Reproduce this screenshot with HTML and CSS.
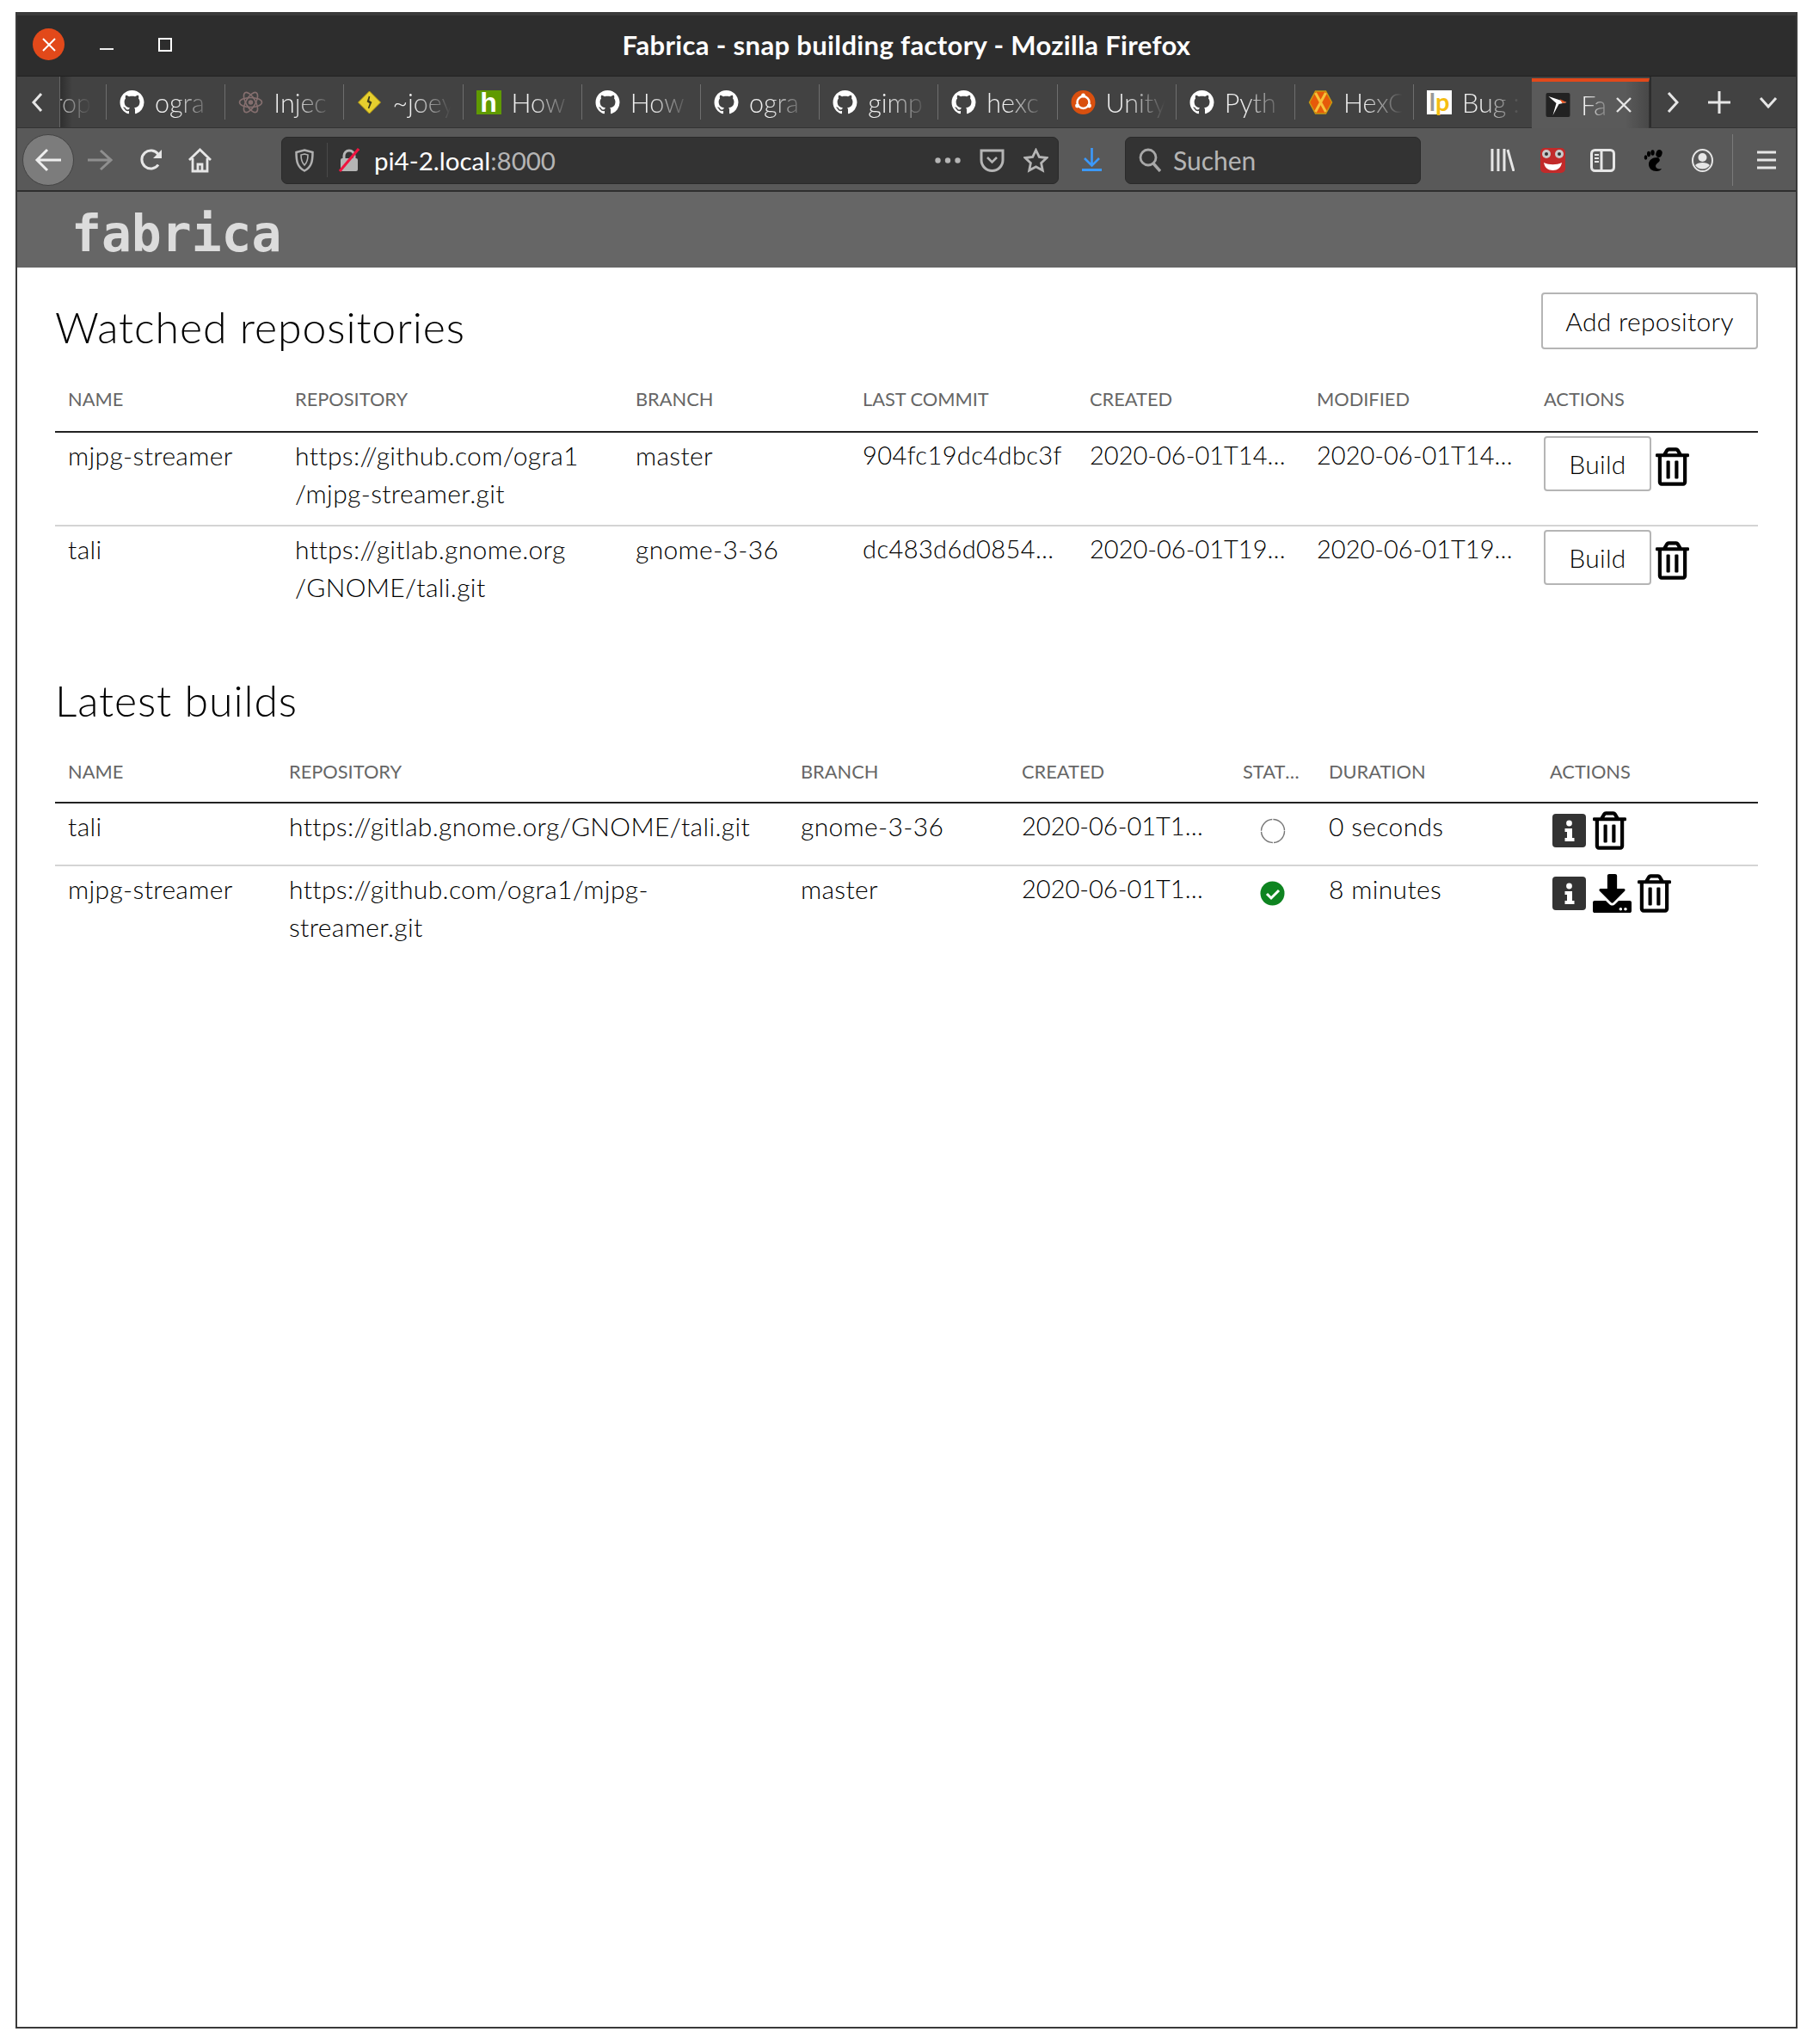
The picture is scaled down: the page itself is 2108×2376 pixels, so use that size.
FILE: index.html
```html
<!DOCTYPE html>
<html lang="en">
<head>
  <meta charset="UTF-8">
  <title>Fabrica - snap building factory - Mozilla Firefox</title>
  <link rel="stylesheet" href="styles.css">
</head>
<body>
  <svg class="sprites" width="0" height="0">
    <symbol id="i-github" viewBox="0 0 16 16"><path fill="currentColor" d="M8 0C3.58 0 0 3.58 0 8c0 3.54 2.29 6.53 5.47 7.59.4.07.55-.17.55-.38 0-.19-.01-.82-.01-1.49-2.01.37-2.53-.49-2.69-.94-.09-.23-.48-.94-.82-1.13-.28-.15-.68-.52-.01-.53.63-.01 1.08.58 1.23.82.72 1.21 1.87.87 2.33.66.07-.52.28-.87.51-1.07-1.78-.2-3.64-.89-3.64-3.95 0-.87.31-1.59.82-2.15-.08-.2-.36-1.02.08-2.12 0 0 .67-.21 2.2.82.64-.18 1.32-.27 2-.27.68 0 1.36.09 2 .27 1.53-1.04 2.2-.82 2.2-.82.44 1.1.16 1.92.08 2.12.51.56.82 1.27.82 2.15 0 3.07-1.87 3.75-3.65 3.95.29.25.54.73.54 1.48 0 1.07-.01 1.93-.01 2.2 0 .21.15.46.55.38A8.013 8.013 0 0016 8c0-4.42-3.58-8-8-8z"/></symbol>
    <symbol id="i-trash" viewBox="0 0 448 512"><path fill="currentColor" d="M268 416h24a12 12 0 0 0 12-12V188a12 12 0 0 0-12-12h-24a12 12 0 0 0-12 12v216a12 12 0 0 0 12 12zM432 80h-82.41l-34-56.7A48 48 0 0 0 274.41 0H173.59a48 48 0 0 0-41.16 23.3L98.41 80H16A16 16 0 0 0 0 96v16a16 16 0 0 0 16 16h16v336a48 48 0 0 0 48 48h288a48 48 0 0 0 48-48V128h16a16 16 0 0 0 16-16V96a16 16 0 0 0-16-16zM171.84 50.91A6 6 0 0 1 177 48h94a6 6 0 0 1 5.15 2.91L293.61 80H154.39zM368 464H80V128h288zm-212-48h24a12 12 0 0 0 12-12V188a12 12 0 0 0-12-12h-24a12 12 0 0 0-12 12v216a12 12 0 0 0 12 12z"/></symbol>
    <symbol id="i-download" viewBox="0 0 512 512"><path fill="currentColor" d="M216 0h80c13.3 0 24 10.7 24 24v168h87.7c17.8 0 26.7 21.5 14.1 34.1L269.7 378.3c-7.5 7.5-19.8 7.5-27.3 0L90.1 226.1c-12.6-12.6-3.7-34.1 14.1-34.1H192V24c0-13.3 10.7-24 24-24zm296 376v112c0 13.3-10.7 24-24 24H24c-13.3 0-24-10.7-24-24V376c0-13.3 10.7-24 24-24h146.7l49 49c20.1 20.1 52.5 20.1 72.6 0l49-49H488c13.3 0 24 10.7 24 24zm-124 88c0-11-9-20-20-20s-20 9-20 20 9 20 20 20 20-9 20-20zm64 0c0-11-9-20-20-20s-20 9-20 20 9 20 20 20 20-9 20-20z"/></symbol>
    <symbol id="i-info" viewBox="0 0 39 39"><rect width="39" height="39" rx="4" fill="#333"/><circle cx="19.500" cy="11" r="3.400" fill="#fff"/><path fill="#fff" d="M14.500 17h8.500v11h2.500v4h-11v-4h2.500v-7h-2.500z"/></symbol>
  </svg>

  <div class="window">
    <header class="titlebar">
      <div class="wm-buttons">
        <span class="wm-close">
          <svg width="18" height="18" viewBox="0 0 18 18"><path d="M2 2l14 14M16 2L2 16" stroke="#fff" stroke-width="2"/></svg>
        </span>
        <span class="wm-min"></span>
        <span class="wm-max"></span>
      </div>
      <div class="window-title">Fabrica - snap building factory - Mozilla Firefox</div>
      <div></div>
    </header>

    <div class="tabstrip">
      <div class="tab-scroll">
        <svg width="16" height="26" viewBox="0 0 16 26"><path d="M13 3L4 13l9 10" fill="none" stroke="#e6e6e6" stroke-width="3"/></svg>
      </div>
      <div class="tab tab-cut"><span class="tab-label">rop</span></div>
      <div class="tab"><svg class="favicon"><use href="#i-github"/></svg><span class="tab-label">ogra</span></div>
      <div class="tab">
        <svg class="favicon dim" viewBox="0 0 28 28" fill="none" stroke="#8d7474" stroke-width="1.600"><ellipse cx="14" cy="14" rx="13" ry="5.500" transform="rotate(60 14 14)"/><ellipse cx="14" cy="14" rx="13" ry="5.500" transform="rotate(-60 14 14)"/><ellipse cx="14" cy="14" rx="13" ry="5.500"/><circle cx="14" cy="14" r="2" fill="#8d7474"/></svg>
        <span class="tab-label">Injec</span>
      </div>
      <div class="tab">
        <svg class="favicon" viewBox="0 0 28 28"><path d="M14 1l13 13-13 13L1 14z" fill="#e6cf2e" stroke="#b89c10"/><path d="M14 7l-2 6 3 2-2 6 3-7-3-2z" fill="#3c3c1c" stroke="#3c3c1c" stroke-width="1.500"/></svg>
        <span class="tab-label">~joey</span>
      </div>
      <div class="tab"><span class="favicon fav-h">h</span><span class="tab-label">How</span></div>
      <div class="tab"><svg class="favicon"><use href="#i-github"/></svg><span class="tab-label">How</span></div>
      <div class="tab"><svg class="favicon"><use href="#i-github"/></svg><span class="tab-label">ogra</span></div>
      <div class="tab"><svg class="favicon"><use href="#i-github"/></svg><span class="tab-label">gimp</span></div>
      <div class="tab"><svg class="favicon"><use href="#i-github"/></svg><span class="tab-label">hexc</span></div>
      <div class="tab">
        <svg class="favicon" viewBox="0 0 28 28"><circle cx="14" cy="14" r="14" fill="#d9500f"/><circle cx="14" cy="14" r="7" fill="none" stroke="#fff" stroke-width="2.500"/><circle cx="14" cy="6" r="2.400" fill="#fff"/><circle cx="7" cy="18" r="2.400" fill="#fff"/><circle cx="21" cy="18" r="2.400" fill="#fff"/></svg>
        <span class="tab-label">Unity</span>
      </div>
      <div class="tab"><svg class="favicon"><use href="#i-github"/></svg><span class="tab-label">Pyth</span></div>
      <div class="tab">
        <svg class="favicon" viewBox="0 0 28 28"><path d="M8 1h12l7 13-7 13H8L1 14z" fill="#e65a0a" stroke="#c79a10" stroke-width="1.500"/><path d="M8 3l12 22M20 3L8 25" stroke="#f6c23a" stroke-width="3"/></svg>
        <span class="tab-label">HexC</span>
      </div>
      <div class="tab"><span class="favicon fav-lp"><span class="lp-l">l</span><span class="lp-p">p</span></span><span class="tab-label">Bug :</span></div>
      <div class="tab tab-active">
        <svg class="favicon" viewBox="0 0 28 28"><rect width="28" height="28" rx="2" fill="#222"/><path d="M3 4l21 7-9 2-7 13 4-14z" fill="#fff"/><path d="M16 7l8 4-5 1z" fill="#e95420"/></svg>
        <span class="tab-label">Fa</span>
        <svg class="tab-close" width="18" height="18" viewBox="0 0 18 18"><path d="M1 1l16 16M17 1L1 17" stroke="#e6e6e6" stroke-width="2.400"/></svg>
      </div>
      <div class="tab-tools">
        <svg class="tool-next" width="14" height="26" viewBox="0 0 14 26"><path d="M2 2l10 11L2 24" fill="none" stroke="#e6e6e6" stroke-width="3"/></svg>
        <svg class="tool-new" width="26" height="26" viewBox="0 0 26 26"><path d="M13 0v26M0 13h26" stroke="#e6e6e6" stroke-width="3"/></svg>
        <svg class="tool-list" width="22" height="14" viewBox="0 0 22 14"><path d="M2 2l9 10 9-10" fill="none" stroke="#e6e6e6" stroke-width="3"/></svg>
      </div>
    </div>

    <nav class="navbar">
      <span class="nav-back">
        <svg width="32" height="28" viewBox="0 0 32 28"><path d="M31 14H3M15 2L3 14l12 12" fill="none" stroke="#eee" stroke-width="3"/></svg>
      </span>
      <svg class="nav-forward" width="29" height="26" viewBox="0 0 29 26"><path d="M0 13h27M15 2l12 11-12 11" fill="none" stroke="#8f8f8f" stroke-width="3"/></svg>
      <svg class="nav-reload" width="27" height="26" viewBox="0 0 27 26"><path d="M22 18.500A10.500 10.500 0 1 1 22 6.500" fill="none" stroke="#e6e6e6" stroke-width="3"/><path d="M26 1v10H16z" fill="#e6e6e6"/></svg>
      <svg class="nav-home" width="29" height="29" viewBox="0 0 29 29"><path d="M2 14L14.500 2 27 14M6 12v15h17V12M12 27v-8h5v8" fill="none" stroke="#e6e6e6" stroke-width="2.800"/></svg>

      <div class="urlbar">
        <svg class="url-shield" width="22" height="27" viewBox="0 0 22 27"><path d="M11 1.500l9.500 2.500c0 10-1 17-9.500 21.500C2.500 21 1.500 14 1.500 4z" fill="none" stroke="#b0b0b0" stroke-width="2.500"/><path d="M11 6l4 1c0 6-1 9-4 12-3-3-4-6-4-12z" fill="none" stroke="#b0b0b0" stroke-width="1.600"/></svg>
        <span class="url-sep"></span>
        <svg class="url-lock" width="24" height="28" viewBox="0 0 24 28"><path d="M6 13V9a6 6 0 0 1 12 0v4" fill="none" stroke="#b5b5b5" stroke-width="3"/><rect x="2" y="12" width="20" height="15" rx="2" fill="#b5b5b5"/><path d="M1 27L23 1" stroke="#f0133f" stroke-width="3"/></svg>
        <span class="url-text">pi4-2.local<span class="url-port">:8000</span></span>
        <svg class="url-more" width="30" height="7" viewBox="0 0 30 7" fill="#b5b5b5"><circle cx="3.500" cy="3.500" r="3.200"/><circle cx="15" cy="3.500" r="3.200"/><circle cx="26.500" cy="3.500" r="3.200"/></svg>
        <svg class="url-pocket" width="29" height="27" viewBox="0 0 29 27"><path d="M2 2h25v11a12.500 12.500 0 0 1-25 0z" fill="none" stroke="#b5b5b5" stroke-width="3"/><path d="M9 10l5.500 5.500L20 10" fill="none" stroke="#b5b5b5" stroke-width="2.500"/></svg>
        <svg class="url-star" width="29" height="29" viewBox="0 0 29 29"><path d="M14.500 2.500l3.800 7.900 8.700 1.100-6.400 6 1.700 8.600-7.800-4.300-7.800 4.300 1.700-8.600-6.400-6 8.700-1.100z" fill="none" stroke="#b5b5b5" stroke-width="2.800"/></svg>
      </div>

      <svg class="nav-download" width="23" height="28" viewBox="0 0 23 28"><path d="M11.500 0v19M3 12l8.500 8.500L20 12" fill="none" stroke="#3b99fc" stroke-width="2.600"/><path d="M0 25.500h23" stroke="#3b99fc" stroke-width="3"/></svg>

      <div class="searchbar">
        <svg width="26" height="28" viewBox="0 0 26 28"><circle cx="11" cy="11" r="9" fill="none" stroke="#a8a8a8" stroke-width="2.800"/><path d="M17 18l8 9" stroke="#a8a8a8" stroke-width="3.400"/></svg>
        <span class="search-text">Suchen</span>
      </div>

      <svg class="nav-library" width="28" height="26" viewBox="0 0 28 26" stroke="#e6e6e6" stroke-width="3"><path d="M2 0v26M9 0v26M16 0v26M20 1l7 25"/></svg>
      <svg class="nav-face" width="29" height="29" viewBox="0 0 29 29"><rect width="29" height="29" rx="5" fill="#c22a2a"/><circle cx="7" cy="7" r="5" fill="#c9c9c9"/><circle cx="22" cy="7" r="5" fill="#c9c9c9"/><circle cx="7" cy="7" r="2" fill="#333"/><circle cx="22" cy="7" r="2" fill="#333"/><path d="M4 17c6 3 15 3 21 0-1 6-5 9-10.500 9S5 23 4 17z" fill="#fff"/></svg>
      <svg class="nav-sidebar" width="29" height="27" viewBox="0 0 29 27"><rect x="1.500" y="1.500" width="26" height="24" rx="4" fill="none" stroke="#e6e6e6" stroke-width="3"/><path d="M13 2v23" stroke="#e6e6e6" stroke-width="3"/><path d="M5 7h5M5 11h5M5 15h5" stroke="#e6e6e6" stroke-width="2"/></svg>
      <svg class="nav-foot" width="22" height="25" viewBox="0 0 22 25"><ellipse cx="2.500" cy="9" rx="1.800" ry="2.800"/><ellipse cx="6" cy="5" rx="2" ry="3.200"/><ellipse cx="10.500" cy="3.500" rx="2.200" ry="3.200"/><ellipse cx="18" cy="4.500" rx="3.500" ry="4.500" transform="rotate(20 18 4.500)"/><path d="M16 9c-6 0-10 3-10 8 0 5 4 8 9 8 3 0 5-1 6-3-3 1-7 0-7-3 0-2 2-3 4-5s0-5-2-5z"/></svg>
      <svg class="nav-account" width="25" height="27" viewBox="0 0 25 27"><ellipse cx="12.500" cy="13.500" rx="11.500" ry="12.500" fill="none" stroke="#e6e6e6" stroke-width="2"/><circle cx="12.500" cy="10" r="5" fill="#e6e6e6"/><path d="M4 19c3-4 14-4 17 0-4 6-13 6-17 0z" fill="#e6e6e6"/></svg>
      <span class="nav-sep"></span>
      <svg class="nav-menu" width="22" height="22" viewBox="0 0 22 22" stroke="#e6e6e6" stroke-width="3"><path d="M0 2h22M0 11h22M0 20h22"/></svg>
    </nav>

    <div class="site-header"><span class="logo">fabrica</span></div>

    <main class="content">
      <div class="section-head">
        <h1>Watched repositories</h1>
        <button class="btn btn-add">Add repository</button>
      </div>
      <table class="repos">
        <colgroup><col class="c264"><col class="c396"><col class="c264"><col class="c264"><col class="c264"><col class="c264"><col class="c264"></colgroup>
        <thead>
          <tr><th>Name</th><th>Repository</th><th>Branch</th><th>Last commit</th><th>Created</th><th>Modified</th><th>Actions</th></tr>
        </thead>
        <tbody>
          <tr>
            <td>mjpg-streamer</td>
            <td>https://github.com/ogra1<br>/mjpg-streamer.git</td>
            <td>master</td>
            <td class="cut hash">904fc19dc4dbc3f</td>
            <td class="cut">2020-06-01T14:21:37</td>
            <td class="cut">2020-06-01T14:21:37</td>
            <td class="actions"><div class="action-row"><button class="btn btn-build">Build</button><svg class="ico-trash"><use href="#i-trash"/></svg></div></td>
          </tr>
          <tr>
            <td>tali</td>
            <td>https://gitlab.gnome.org<br>/GNOME/tali.git</td>
            <td>gnome-3-36</td>
            <td class="cut hash">dc483d6d0854e07</td>
            <td class="cut">2020-06-01T19:04:52</td>
            <td class="cut">2020-06-01T19:04:52</td>
            <td class="actions"><div class="action-row"><button class="btn btn-build">Build</button><svg class="ico-trash"><use href="#i-trash"/></svg></div></td>
          </tr>
        </tbody>
      </table>

      <h1 class="builds-title">Latest builds</h1>
      <table class="builds">
        <colgroup><col class="c257"><col class="c595"><col class="c257"><col class="c257"><col class="c100"><col class="c257"><col class="c257"></colgroup>
        <thead>
          <tr><th>Name</th><th>Repository</th><th>Branch</th><th>Created</th><th class="cut th-status">Status</th><th>Duration</th><th>Actions</th></tr>
        </thead>
        <tbody>
          <tr>
            <td>tali</td>
            <td>https://gitlab.gnome.org/GNOME/tali.git</td>
            <td>gnome-3-36</td>
            <td class="cut">2020-06-01T19:04:52</td>
            <td class="status"><svg width="30" height="30" viewBox="0 0 30 30"><circle cx="15" cy="15" r="13.500" fill="none" stroke="#777" stroke-width="1.400" stroke-dasharray="20 1.200"/></svg></td>
            <td>0 seconds</td>
            <td class="icons"><div class="icon-row"><svg class="ico-info"><use href="#i-info"/></svg><svg class="ico-trash"><use href="#i-trash"/></svg></div></td>
          </tr>
          <tr>
            <td>mjpg-streamer</td>
            <td>https://github.com/ogra1/mjpg-<br>streamer.git</td>
            <td>master</td>
            <td class="cut">2020-06-01T14:21:37</td>
            <td class="status"><svg width="30" height="30" viewBox="0 0 30 30"><circle cx="14.500" cy="14.500" r="14" fill="#0e8420"/><path d="M8 15l5 5 9-9" fill="none" stroke="#fff" stroke-width="3"/></svg></td>
            <td>8 minutes</td>
            <td class="icons"><div class="icon-row"><svg class="ico-info"><use href="#i-info"/></svg><svg class="ico-download"><use href="#i-download"/></svg><svg class="ico-trash"><use href="#i-trash"/></svg></div></td>
          </tr>
        </tbody>
      </table>
    </main>
  </div>
</body>
</html>
```

FILE: styles.css
```css
:root {
  --title-bg: #2d2d2d;
  --tab-bg: #424242;
  --nav-bg: #595959;
  --field-bg: #333;
  --line-dark: #222;
  --line-light: #d4d4d4;
  --page-font: "Lato", "Open Sans", sans-serif;
}

* {
  box-sizing: border-box;
}

html, body {
  margin: 0;
  background: #fff;
}

body {
  padding: 14px 18px 18px;
  font-family: var(--page-font);
  color: #000;
}

.sprites {
  position: absolute;
}

.window {
  width: 2072px;
  height: 2344px;
  border: 2px solid #3a3a3a;
  border-top: 4px solid #3a3a3a;
  display: flex;
  flex-direction: column;
}

/* window title */
.titlebar {
  height: 71px;
  flex: none;
  background: var(--title-bg);
  display: grid;
  grid-template-columns: 1fr auto 1fr;
  align-items: center;
  border-bottom: 1px solid #222;
  padding-bottom: 3px;
}

.wm-buttons {
  display: flex;
  align-items: center;
  padding-left: 18px;
}

.wm-close {
  width: 37px;
  height: 37px;
  border-radius: 50%;
  background: #e2491a;
  display: flex;
  align-items: center;
  justify-content: center;
}

.wm-min {
  width: 16px;
  height: 2px;
  background: #eee;
  margin-left: 41px;
  margin-top: 11px;
}

.wm-max {
  width: 16px;
  height: 16px;
  border: 2px solid #fff;
  margin-left: 52px;
}

.window-title {
  color: #fff;
  font-size: 31px;
  letter-spacing: 0.35px;
  font-weight: 700;
  white-space: nowrap;
}

/* tabs */
.tabstrip {
  height: 60px;
  flex: none;
  background: var(--tab-bg);
  display: flex;
  border-bottom: 1px solid #333;
}

.tab-scroll {
  width: 50px;
  flex: none;
  border-right: 1px solid #666;
  display: flex;
  align-items: center;
  padding-left: 15px;
}

.tab {
  width: 138.2px;
  flex: none;
  display: flex;
  align-items: center;
  gap: 12px;
  padding-left: 16px;
  position: relative;
  overflow: hidden;
}

.tab::before {
  content: "";
  position: absolute;
  left: 0;
  top: 9px;
  bottom: 9px;
  width: 1px;
  background: #6e6e6e;
}

.tab-cut {
  width: 53px;
  padding-left: 0;
  background: linear-gradient(90deg, #2f2f2f, #424242 14px);
}

.tab-cut::before {
  display: none;
}

.tab-cut .tab-label {
  width: 50px;
  flex: none;
  margin-left: -8px;
  color: #aaa;
}

.favicon {
  width: 29px;
  height: 28px;
  flex: none;
  color: #fff;
}

.favicon.dim {
  opacity: 0.9;
}

.fav-h {
  background: #5f9a00;
  color: #fff;
  font: 700 32px/28px "Liberation Sans", sans-serif;
  text-align: center;
}

.fav-lp {
  background: #fff;
  font: 700 29px/25px "Lato", sans-serif;
  display: flex;
  justify-content: center;
}

.lp-l {
  color: #999;
}

.lp-p {
  color: #f5bd12;
}

.tab-label {
  width: 78px;
  flex: none;
  color: #eee;
  font-size: 30.5px;
  font-weight: 300;
  white-space: nowrap;
  overflow: hidden;
  -webkit-mask-image: linear-gradient(90deg, #000 30%, transparent 88%);
  mask-image: linear-gradient(90deg, #000 30%, transparent 88%);
}

.tab-active {
  width: 137px;
  background: linear-gradient(90deg, #5a5a5a 80%, #484848);
  border-top: 4px solid #e2491a;
  border-right: 1px solid #333;
  margin-top: 2px;
  margin-bottom: -1px;
}

.tab-active::before {
  display: none;
}

.tab-active .tab-label {
  width: 29px;
  -webkit-mask-image: linear-gradient(90deg, #000 20%, rgba(0,0,0,.3));
  mask-image: linear-gradient(90deg, #000 20%, rgba(0,0,0,.3));
}

.tab-close {
  flex: none;
}

.tab-tools {
  display: flex;
  align-items: center;
  border-left: 2px solid #2d2d2d;
  flex: 1;
}

.tool-next {
  margin-left: 18px;
}

.tool-new {
  margin-left: 34px;
}

.tool-list {
  margin-left: 33px;
}

/* toolbar */
.navbar {
  height: 74px;
  flex: none;
  background: var(--nav-bg);
  border-bottom: 2px solid #2f2f2f;
  display: flex;
  align-items: center;
  padding: 2px 0 0 6px;
}

.navbar svg {
  flex: none;
}

.nav-back {
  width: 60px;
  height: 60px;
  flex: none;
  border-radius: 50%;
  background: #7c7c7c;
  border: 1px solid #444;
  display: flex;
  align-items: center;
  justify-content: center;
}

.nav-forward { margin-left: 16px; }
.nav-reload { margin-left: 31px; }
.nav-home { margin-left: 29px; }
.nav-download { margin-left: 27px; }
.nav-library { margin-left: 81px; }
.nav-face { margin-left: 30px; }
.nav-sidebar { margin-left: 29px; }
.nav-foot { margin-left: 33px; }
.nav-account { margin-left: 34px; }
.nav-menu { margin-left: 28px; }

.nav-sep {
  width: 1px;
  height: 60px;
  flex: none;
  background: #7a7a7a;
  margin-left: 22px;
}

.urlbar, .searchbar {
  height: 55px;
  flex: none;
  background: var(--field-bg);
  border: 1px solid #2a2a2a;
  border-radius: 7px;
  display: flex;
  align-items: center;
}

.urlbar {
  width: 904px;
  margin-left: 80px;
  padding-left: 15px;
}

.url-sep {
  width: 1px;
  height: 40px;
  background: #4a4a4a;
  margin-left: 15px;
}

.url-lock {
  margin-left: 13px;
}

.url-text {
  margin-left: 17px;
  flex: 1;
  color: #fff;
  font-size: 29.5px;
  font-weight: 400;
}

.url-port {
  color: #b5b5b5;
}

.url-more { margin-right: 22px; }
.url-pocket { margin-right: 22px; }
.url-star { margin-right: 11px; }

.searchbar {
  width: 344px;
  margin-left: 27px;
  padding-left: 15px;
}

.search-text {
  margin-left: 14px;
  color: #b5b5b5;
  font-size: 30px;
}

/* page header */
.site-header {
  height: 88px;
  flex: none;
  background: #666;
  padding: 13px 0 0 63px;
}

.logo {
  display: block;
  color: #dcdcdc;
  font: 700 58px/72px "DejaVu Sans Mono", monospace;
  filter: blur(0.7px);
}

/* page content */
.content {
  flex: 1;
  padding: 29px 44px 0;
  background: #fff;
}

.section-head {
  display: flex;
  justify-content: space-between;
  align-items: flex-start;
  height: 66px;
}

h1 {
  margin: 0;
  font-size: 50px;
  letter-spacing: 0.9px;
  font-weight: 300;
  line-height: 64px;
  color: #000;
  padding-top: 8px;
}

.btn {
  font-family: var(--page-font);
  font-size: 30px;
  letter-spacing: 0.3px;
  font-weight: 300;
  color: #000;
  background: #fff;
  border: 2px solid #b5b5b5;
  border-radius: 4px;
  padding: 0;
}

.btn-add {
  width: 252px;
  height: 66px;
}

.btn-build {
  width: 125px;
  height: 64px;
  flex: none;
}

table {
  width: 1980px;
  table-layout: fixed;
  border-collapse: collapse;
}

col.c264 { width: 264px; }
col.c396 { width: 396px; }
col.c257 { width: 257px; }
col.c595 { width: 595px; }
col.c100 { width: 100px; }

th {
  text-align: left;
  text-transform: uppercase;
  font-size: 21.8px;
  font-weight: 400;
  color: #666;
  line-height: 44px;
  padding: 36px 15px 15px;
  border-bottom: 2px solid var(--line-dark);
  white-space: nowrap;
}

td {
  vertical-align: top;
  font-size: 30px;
  letter-spacing: 0.35px;
  font-weight: 300;
  line-height: 44px;
  padding: 4px 15px 15px;
  border-bottom: 2px solid var(--line-light);
}

tbody tr:last-child td {
  border-bottom: none;
}

.cut {
  white-space: nowrap;
  overflow: hidden;
  text-overflow: ellipsis;
}

td.cut {
  font-size: 29px;
  letter-spacing: 0;
}

td.hash {
  letter-spacing: 0.4px;
}

th.th-status {
  padding-right: 22px;
}

.repos td.actions {
  padding: 4px 0 0 15px;
}

.action-row, .icon-row {
  display: flex;
  align-items: flex-start;
}

.action-row .ico-trash {
  margin: 13px 0 0 5px;
}

.ico-trash {
  width: 39px;
  height: 45px;
  flex: none;
  color: #000;
}

.ico-info {
  width: 39px;
  height: 39px;
  flex: none;
  margin: 3px 8px 0 0;
}

.ico-download {
  width: 45px;
  height: 45px;
  flex: none;
  color: #000;
  margin-right: 7px;
}

.builds-title {
  margin-top: 55px;
}

.builds th {
  padding: 29px 15px 13px;
}

td.status {
  padding: 13px 0 0 35px;
}

td.icons {
  padding: 9px 0 17px 18px;
}
```
